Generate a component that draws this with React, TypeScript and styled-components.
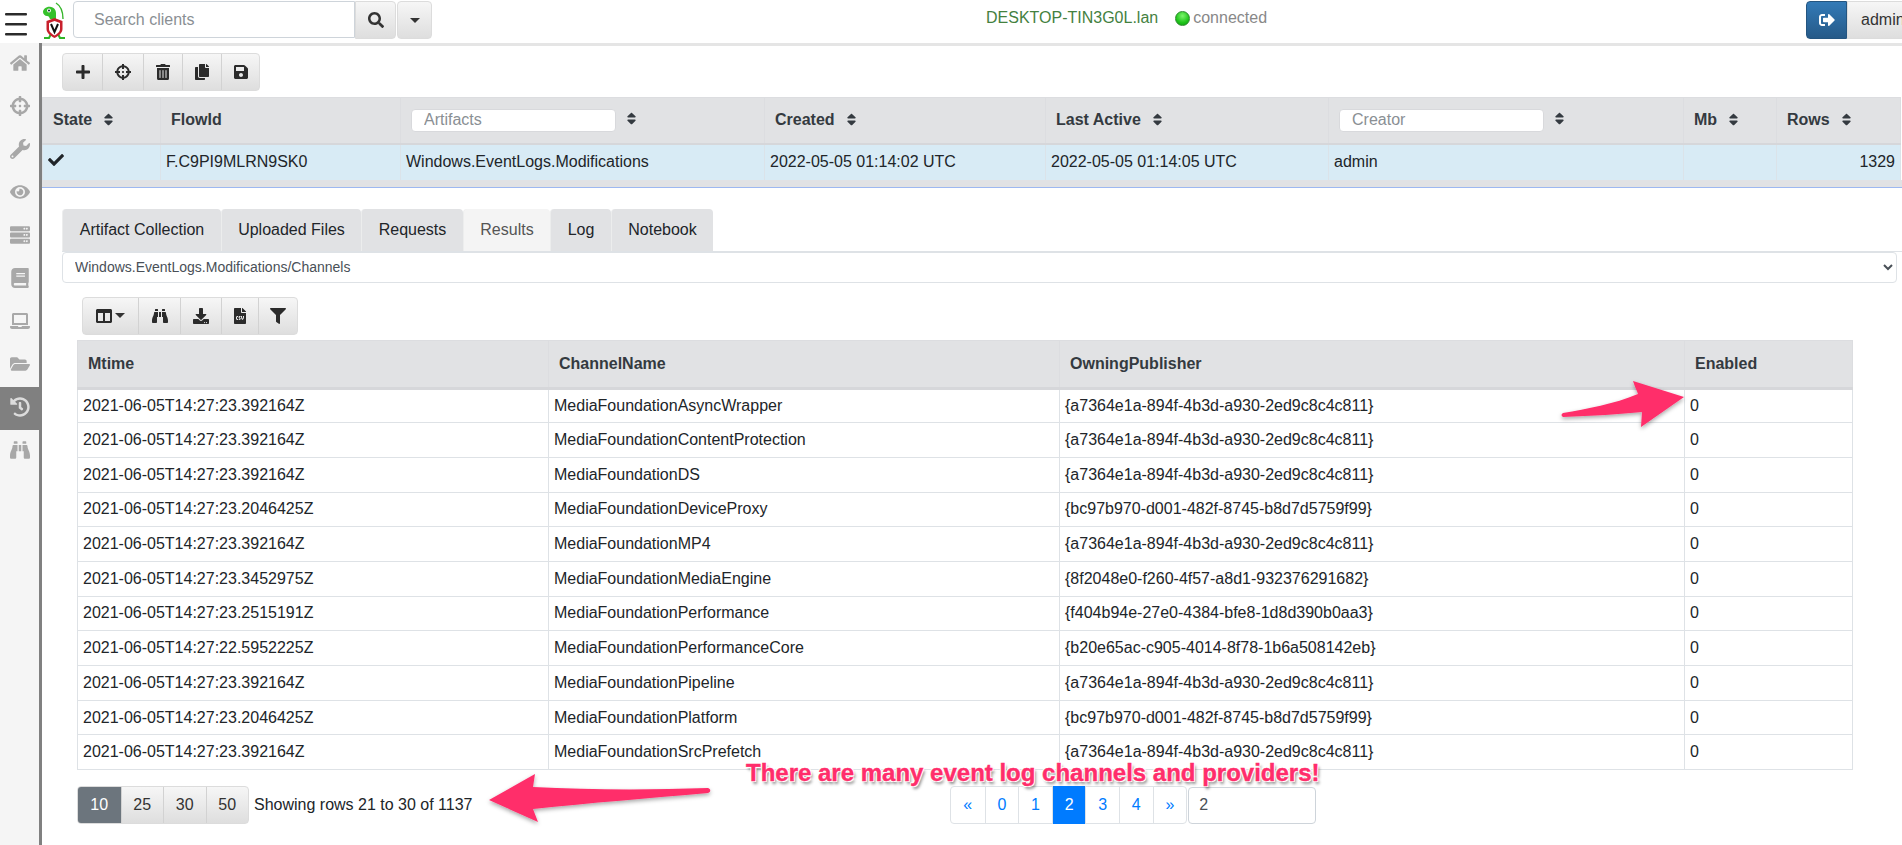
import styled, { createGlobalStyle } from "styled-components";
import {
  FaBinoculars,
  FaBook,
  FaCheck,
  FaColumns,
  FaCopy,
  FaCrosshairs,
  FaDownload,
  FaEye,
  FaFileCsv,
  FaFilter,
  FaFolderOpen,
  FaHistory,
  FaHome,
  FaLaptop,
  FaPlus,
  FaSave,
  FaSearch,
  FaServer,
  FaSignOutAlt,
  FaSort,
  FaTrashAlt,
  FaWrench,
} from "react-icons/fa";

const GlobalStyle = createGlobalStyle`
  html, body {
    margin: 0;
    height: 845px;
    overflow: hidden;
    background: #fff;
    font-family: "Liberation Sans", Arial, sans-serif;
    font-size: 16px;
    color: #212529;
  }
  * {
    box-sizing: border-box;
  }
`;

const Page = styled.div`
  position: relative;
  width: 1902px;
  height: 845px;
  overflow: hidden;
`;

const Header = styled.header`
  display: flex;
  align-items: flex-start;
  height: 43px;
  padding: 1px 0 0 5px;

  & > * {
    flex: none;
  }
`;

const Burger = styled.svg`
  width: 22px;
  height: 24px;
  margin-top: 12px;
  color: #2b2b2b;
`;

const Logo = styled.svg`
  width: 24px;
  height: 38px;
  margin-left: 15px;
`;

const SearchInput = styled.input`
  width: 282px;
  height: 37px;
  margin-left: 7px;
  padding: 0 20px;
  border: 1px solid #ced4da;
  border-radius: 4px 0 0 4px;
  font: 16px "Liberation Sans", Arial, sans-serif;
  outline: none;

  &::placeholder {
    color: #8a8f94;
  }
`;

const HeaderButton = styled.button`
  display: flex;
  align-items: center;
  justify-content: center;
  width: 41px;
  height: 38px;
  padding: 0;
  border: 1px solid #dcdcdc;
  border-radius: 0 4px 4px 0;
  background: linear-gradient(#f6f6f6, #dedede);
  color: #333;
  font-size: 16px;
`;

const CaretButton = styled(HeaderButton)`
  width: 35px;
  margin-left: 1px;
  border-radius: 4px;
`;

const Caret = styled.span`
  display: inline-block;
  width: 0;
  height: 0;
  border-top: 5px solid #333;
  border-left: 5px solid transparent;
  border-right: 5px solid transparent;
`;

const HostName = styled.span`
  margin: 8px 0 0 554px;
  color: #44813f;
  white-space: nowrap;
`;

const StatusDot = styled.span`
  width: 15px;
  height: 15px;
  margin: 10px 0 0 17px;
  border: 1px solid #2c8a2c;
  border-radius: 50%;
  background: radial-gradient(circle at 50% 30%, #7cf56c, #1fc41a 60%, #0e9a0e);
`;

const StatusText = styled.span`
  margin: 8px 0 0 3px;
  color: #888;
  white-space: nowrap;
`;

const LogoutButton = styled.button`
  display: flex;
  align-items: center;
  justify-content: center;
  width: 41px;
  height: 38px;
  margin-left: 539px;
  padding: 0;
  border: 1px solid #245580;
  border-radius: 4px 0 0 4px;
  background: linear-gradient(#337ab7, #265a88);
  color: #fff;
  font-size: 16px;
`;

const AdminButton = styled.button`
  width: 70px;
  height: 38px;
  padding: 0 0 0 13px;
  border: 1px solid #dcdcdc;
  background: linear-gradient(#f6f6f6, #dedede);
  color: #333;
  text-align: left;
  font: 16px "Liberation Sans", Arial, sans-serif;
`;

const Body = styled.div`
  display: flex;
  height: 802px;
`;

const Sidebar = styled.nav`
  flex: none;
  width: 42px;
  background: #f5f5f5;
  border-right: 3px solid #808080;
`;

const SideItem = styled.div<{ $active?: boolean }>`
  display: flex;
  align-items: center;
  justify-content: center;
  height: 43px;
  padding-bottom: 3px;
  background: ${({ $active }) => ($active ? "#808080" : "transparent")};
  color: ${({ $active }) => ($active ? "#dcdcdc" : "#a8a8a8")};
  font-size: 20px;
`;

const Main = styled.main`
  flex: 1;
  min-width: 0;
  border-top: 3px solid #e5e5e5;
`;

const ToolGroup = styled.div<{ $left: number; $top: number }>`
  display: flex;
  width: max-content;
  height: 38px;
  margin: ${({ $top }) => $top}px 0 0 ${({ $left }) => $left}px;
  border-radius: 4px;
  overflow: hidden;
  border: 1px solid #dcdcdc;
  background: linear-gradient(#f6f6f6, #dedede);
`;

const ToolButton = styled.button<{ $width: number }>`
  display: flex;
  align-items: center;
  justify-content: center;
  gap: 3px;
  width: ${({ $width }) => $width}px;
  padding: 0;
  border: 0;
  border-left: 1px solid #d2d2d2;
  background: transparent;
  color: #2b2b2b;
  font-size: 16px;

  &:first-child {
    border-left: 0;
  }
`;

const FlowTable = styled.table`
  margin: 6px 0 0;
  border-collapse: collapse;
  table-layout: fixed;
  width: 1858px;
`;

const FlowHeadRow = styled.tr`
  height: 46px;
  background: #e1e2e4;
`;

const FlowHead = styled.th`
  padding: 0 0 0 10px;
  border: 1px solid #dcdde0;
  border-bottom: 2px solid #d6d7da;
  text-align: left;
  font-weight: bold;
  color: #343a40;
  white-space: nowrap;
`;

const SortIcon = styled(FaSort)`
  margin-left: 9px;
  font-size: 15px;
  vertical-align: -2px;
  color: #343a40;
`;

const HeadFilter = styled.input`
  width: 205px;
  height: 23px;
  margin-right: -1px;
  padding: 0 12px;
  border: 1px solid #d8d9dc;
  border-radius: 4px;
  font: 16px "Liberation Sans", Arial, sans-serif;
  vertical-align: middle;

  &::placeholder {
    color: #8a8f94;
  }
`;

const FlowRow = styled.tr`
  height: 36px;
  background: #d8ebf5;
`;

const FlowCell = styled.td<{ $right?: boolean }>`
  padding: 0 5px;
  border-left: 1px solid #dbe3e9;
  border-right: 1px solid #dbe3e9;
  text-align: ${({ $right }) => ($right ? "right" : "left")};
  white-space: nowrap;
`;

const Splitter = styled.div`
  height: 8px;
  background: #e1e2e4;
  border-bottom: 1px solid #9db8f0;
`;

const Tabs = styled.div`
  display: flex;
  height: 43px;
  margin: 21px 0 0 20px;
  border-bottom: 1px solid #dee2e6;
`;

const Tab = styled.div<{ $active?: boolean; $width: number }>`
  display: flex;
  align-items: center;
  justify-content: center;
  width: ${({ $width }) => $width}px;
  border-left: 1px solid #eceded;
  border-radius: 4px 4px 0 0;
  background: ${({ $active }) => ($active ? "#f4f4f4" : "#e1e2e4")};
  color: ${({ $active }) => ($active ? "#555" : "#212529")};
`;

const SourceSelect = styled.select`
  display: block;
  width: 1835px;
  height: 31px;
  margin-left: 20px;
  padding: 0 8px;
  border: 1px solid #dee2e6;
  border-radius: 4px;
  background: #fff;
  color: #495057;
  font: 14px "Liberation Sans", Arial, sans-serif;
`;

const ResultTable = styled.table`
  margin: 5px 0 0 35px;
  border-collapse: collapse;
  table-layout: fixed;
  width: 1775px;
`;

const ResultHeadRow = styled.tr`
  height: 48px;
  background: #e1e2e4;
`;

const ResultHead = styled.th`
  padding: 0 0 0 10px;
  border: 1px solid #dcdde0;
  border-bottom: 3px solid #d6d7da;
  text-align: left;
  font-weight: bold;
  color: #343a40;
`;

const ResultRow = styled.tr`
  height: 34.7px;
`;

const ResultCell = styled.td`
  padding: 0 5px;
  border: 1px solid #dee2e6;
  white-space: nowrap;
`;

const Footer = styled.div`
  display: flex;
  align-items: center;
  height: 38px;
  margin: 16px 0 0 35px;
`;

const PageSizes = styled.div`
  display: flex;
  flex: none;
  height: 38px;
  border: 1px solid #dcdcdc;
  border-radius: 4px;
  overflow: hidden;
  background: linear-gradient(#f6f6f6, #dedede);
`;

const PageSize = styled.div<{ $active?: boolean }>`
  display: flex;
  align-items: center;
  justify-content: center;
  width: 42.5px;
  border-left: 1px solid #d2d2d2;
  background: ${({ $active }) => ($active ? "#6c757d" : "transparent")};
  color: ${({ $active }) => ($active ? "#fff" : "#333")};

  &:first-child {
    border-left: 0;
  }
`;

const RowCount = styled.div`
  flex: none;
  width: 701px;
  padding-left: 5px;
  white-space: nowrap;
`;

const Pager = styled.div`
  display: flex;
  flex: none;
  height: 38px;
  border: 1px solid #dee2e6;
  border-radius: 4px;
`;

const PageLink = styled.div<{ $active?: boolean }>`
  display: flex;
  align-items: center;
  justify-content: center;
  width: 33.6px;
  margin: ${({ $active }) => ($active ? "-1px 0" : "0")};
  border-left: 1px solid #dee2e6;
  background: ${({ $active }) => ($active ? "#007bff" : "transparent")};
  color: ${({ $active }) => ($active ? "#fff" : "#007bff")};

  &:first-child {
    border-left: 0;
  }
`;

const PageInput = styled.input`
  width: 128px;
  height: 37px;
  margin-left: 1px;
  padding: 0 10px;
  border: 1px solid #ced4da;
  border-radius: 4px;
  color: #495057;
  font: 16px "Liberation Sans", Arial, sans-serif;
`;

const Callout = styled.div`
  position: absolute;
  left: 746px;
  top: 759px;
  color: #ff2d6b;
  font-size: 24px;
  font-weight: bold;
  white-space: nowrap;
  -webkit-text-stroke: 0.4px #ff2d6b;
  text-shadow: -1px -1px 0 #fff, 1px -1px 0 #fff, -1px 1px 0 #fff,
    1px 1px 0 #fff, 2px 3px 3px rgba(0, 0, 0, 0.45);
`;

const ArrowLayer = styled.svg`
  position: absolute;
  left: 0;
  top: 0;
  width: 1902px;
  height: 845px;
  pointer-events: none;
`;

const sideIcons = [
  FaHome,
  FaCrosshairs,
  FaWrench,
  FaEye,
  FaServer,
  FaBook,
  FaLaptop,
  FaFolderOpen,
  FaHistory,
  FaBinoculars,
];

const flowWidths = [118, 240, 364, 281, 283, 355, 93, 124];
const resultWidths = [471, 511, 625, 168];

const tabs = [
  { label: "Artifact Collection", width: 159 },
  { label: "Uploaded Files", width: 140 },
  { label: "Requests", width: 102 },
  { label: "Results", width: 87, active: true },
  { label: "Log", width: 61 },
  { label: "Notebook", width: 102 },
];

const rows = [
  ["2021-06-05T14:27:23.392164Z", "MediaFoundationAsyncWrapper", "{a7364e1a-894f-4b3d-a930-2ed9c8c4c811}"],
  ["2021-06-05T14:27:23.392164Z", "MediaFoundationContentProtection", "{a7364e1a-894f-4b3d-a930-2ed9c8c4c811}"],
  ["2021-06-05T14:27:23.392164Z", "MediaFoundationDS", "{a7364e1a-894f-4b3d-a930-2ed9c8c4c811}"],
  ["2021-06-05T14:27:23.2046425Z", "MediaFoundationDeviceProxy", "{bc97b970-d001-482f-8745-b8d7d5759f99}"],
  ["2021-06-05T14:27:23.392164Z", "MediaFoundationMP4", "{a7364e1a-894f-4b3d-a930-2ed9c8c4c811}"],
  ["2021-06-05T14:27:23.3452975Z", "MediaFoundationMediaEngine", "{8f2048e0-f260-4f57-a8d1-932376291682}"],
  ["2021-06-05T14:27:23.2515191Z", "MediaFoundationPerformance", "{f404b94e-27e0-4384-bfe8-1d8d390b0aa3}"],
  ["2021-06-05T14:27:22.5952225Z", "MediaFoundationPerformanceCore", "{b20e65ac-c905-4014-8f78-1b6a508142eb}"],
  ["2021-06-05T14:27:23.392164Z", "MediaFoundationPipeline", "{a7364e1a-894f-4b3d-a930-2ed9c8c4c811}"],
  ["2021-06-05T14:27:23.2046425Z", "MediaFoundationPlatform", "{bc97b970-d001-482f-8745-b8d7d5759f99}"],
  ["2021-06-05T14:27:23.392164Z", "MediaFoundationSrcPrefetch", "{a7364e1a-894f-4b3d-a930-2ed9c8c4c811}"],
];

const App = () => (
  <Page>
    <GlobalStyle />
    <Header>
      <Burger viewBox="0 0 22 24" fill="currentColor">
        <rect y="0" width="22" height="2.6" rx="1" />
        <rect y="10" width="22" height="2.6" rx="1" />
        <rect y="20" width="22" height="2.6" rx="1" />
      </Burger>
      <Logo viewBox="0 0 24 38">
        <path d="M14 2c5 3 7 8 7 16" fill="none" stroke="#35b52a" strokeWidth="1.4" />
        <path d="M1 11c0-3 4-6 8-5 3 .5 5 3 5 6v6H8c-1-2-1-3-3-3-2 0-4-2-4-4z" fill="#35c02a" />
        <circle cx="7" cy="9.500" r="1.900" fill="#fff" />
        <circle cx="7" cy="9.500" r="1" fill="#123" />
        <path d="M2 37h5l2-4M23 37h-5l-2-4" fill="none" stroke="#2fb526" strokeWidth="2" />
        <path d="M12.500 17l8 3v8c0 4-4 7-8 9-4-2-8-5-8-9v-8z" fill="#c8202c" />
        <path d="M12.500 20l5.500 2v6c0 3-3 5-5.500 6.500-2.500-1.500-5.500-3.500-5.500-6.500v-6z" fill="#fff" />
        <path d="M9 23l3.500 8 3.500-8" fill="none" stroke="#111" strokeWidth="2" />
      </Logo>
      <SearchInput placeholder="Search clients" />
      <HeaderButton>
        <FaSearch />
      </HeaderButton>
      <CaretButton>
        <Caret />
      </CaretButton>
      <HostName>DESKTOP-TIN3G0L.lan</HostName>
      <StatusDot />
      <StatusText>connected</StatusText>
      <LogoutButton>
        <FaSignOutAlt />
      </LogoutButton>
      <AdminButton>admin</AdminButton>
    </Header>
    <Body>
      <Sidebar>
        {sideIcons.map((Icon, index) => (
          <SideItem key={index} $active={index === 8}>
            <Icon />
          </SideItem>
        ))}
      </Sidebar>
      <Main>
        <ToolGroup $left={20} $top={7}>
          <ToolButton $width={39}>
            <FaPlus />
          </ToolButton>
          <ToolButton $width={41}>
            <FaCrosshairs />
          </ToolButton>
          <ToolButton $width={39}>
            <FaTrashAlt />
          </ToolButton>
          <ToolButton $width={39}>
            <FaCopy />
          </ToolButton>
          <ToolButton $width={38}>
            <FaSave />
          </ToolButton>
        </ToolGroup>
        <FlowTable>
          <colgroup>
            {flowWidths.map((width, index) => (
              <col key={index} width={width} />
            ))}
          </colgroup>
          <thead>
            <FlowHeadRow>
              <FlowHead>
                State
                <SortIcon />
              </FlowHead>
              <FlowHead>FlowId</FlowHead>
              <FlowHead>
                <HeadFilter placeholder="Artifacts" />
                <SortIcon />
              </FlowHead>
              <FlowHead>
                Created
                <SortIcon />
              </FlowHead>
              <FlowHead>
                Last Active
                <SortIcon />
              </FlowHead>
              <FlowHead>
                <HeadFilter placeholder="Creator" />
                <SortIcon />
              </FlowHead>
              <FlowHead>
                Mb
                <SortIcon />
              </FlowHead>
              <FlowHead>
                Rows
                <SortIcon />
              </FlowHead>
            </FlowHeadRow>
          </thead>
          <tbody>
            <FlowRow>
              <FlowCell>
                <FaCheck />
              </FlowCell>
              <FlowCell>F.C9PI9MLRN9SK0</FlowCell>
              <FlowCell>Windows.EventLogs.Modifications</FlowCell>
              <FlowCell>2022-05-05 01:14:02 UTC</FlowCell>
              <FlowCell>2022-05-05 01:14:05 UTC</FlowCell>
              <FlowCell>admin</FlowCell>
              <FlowCell />
              <FlowCell $right>1329</FlowCell>
            </FlowRow>
          </tbody>
        </FlowTable>
        <Splitter />
        <Tabs>
          {tabs.map(({ label, width, active }) => (
            <Tab key={label} $width={width} $active={active}>
              {label}
            </Tab>
          ))}
        </Tabs>
        <SourceSelect defaultValue="channels">
          <option value="channels">Windows.EventLogs.Modifications/Channels</option>
        </SourceSelect>
        <ToolGroup $left={40} $top={14}>
          <ToolButton $width={55}>
            <FaColumns />
            <Caret />
          </ToolButton>
          <ToolButton $width={42}>
            <FaBinoculars />
          </ToolButton>
          <ToolButton $width={41}>
            <FaDownload />
          </ToolButton>
          <ToolButton $width={37}>
            <FaFileCsv />
          </ToolButton>
          <ToolButton $width={39}>
            <FaFilter />
          </ToolButton>
        </ToolGroup>
        <ResultTable>
          <colgroup>
            {resultWidths.map((width, index) => (
              <col key={index} width={width} />
            ))}
          </colgroup>
          <thead>
            <ResultHeadRow>
              <ResultHead>Mtime</ResultHead>
              <ResultHead>ChannelName</ResultHead>
              <ResultHead>OwningPublisher</ResultHead>
              <ResultHead>Enabled</ResultHead>
            </ResultHeadRow>
          </thead>
          <tbody>
            {rows.map(([mtime, channel, publisher], index) => (
              <ResultRow key={index}>
                <ResultCell>{mtime}</ResultCell>
                <ResultCell>{channel}</ResultCell>
                <ResultCell>{publisher}</ResultCell>
                <ResultCell>0</ResultCell>
              </ResultRow>
            ))}
          </tbody>
        </ResultTable>
        <Footer>
          <PageSizes>
            <PageSize $active>10</PageSize>
            <PageSize>25</PageSize>
            <PageSize>30</PageSize>
            <PageSize>50</PageSize>
          </PageSizes>
          <RowCount>Showing rows 21 to 30 of 1137</RowCount>
          <Pager>
            <PageLink>«</PageLink>
            <PageLink>0</PageLink>
            <PageLink>1</PageLink>
            <PageLink $active>2</PageLink>
            <PageLink>3</PageLink>
            <PageLink>4</PageLink>
            <PageLink>»</PageLink>
          </Pager>
          <PageInput defaultValue="2" />
        </Footer>
      </Main>
    </Body>
    <Callout>There are many event log channels and providers!</Callout>
    <ArrowLayer viewBox="0 0 1902 845">
      <defs>
        <filter id="arrowShadow" x="-10%" y="-20%" width="120%" height="150%">
          <feDropShadow dx="0" dy="2" stdDeviation="2" floodColor="#000" floodOpacity="0.35" />
        </filter>
      </defs>
      <path
        d="M1684 397L1633 381C1635 387 1637 391 1638 394C1614 404 1587 409 1563 413C1561 414 1561 416 1563 417C1592 416 1620 414 1642 412L1641 427Z"
        fill="#ff2d6b"
        filter="url(#arrowShadow)"
      />
      <path
        d="M489 800L535 774L533 787C590 790 650 790 708 788C711 789 711 792 708 793C650 798 590 803 533 809L538 822Z"
        fill="#ff2d6b"
        filter="url(#arrowShadow)"
      />
    </ArrowLayer>
  </Page>
);

export default App;
